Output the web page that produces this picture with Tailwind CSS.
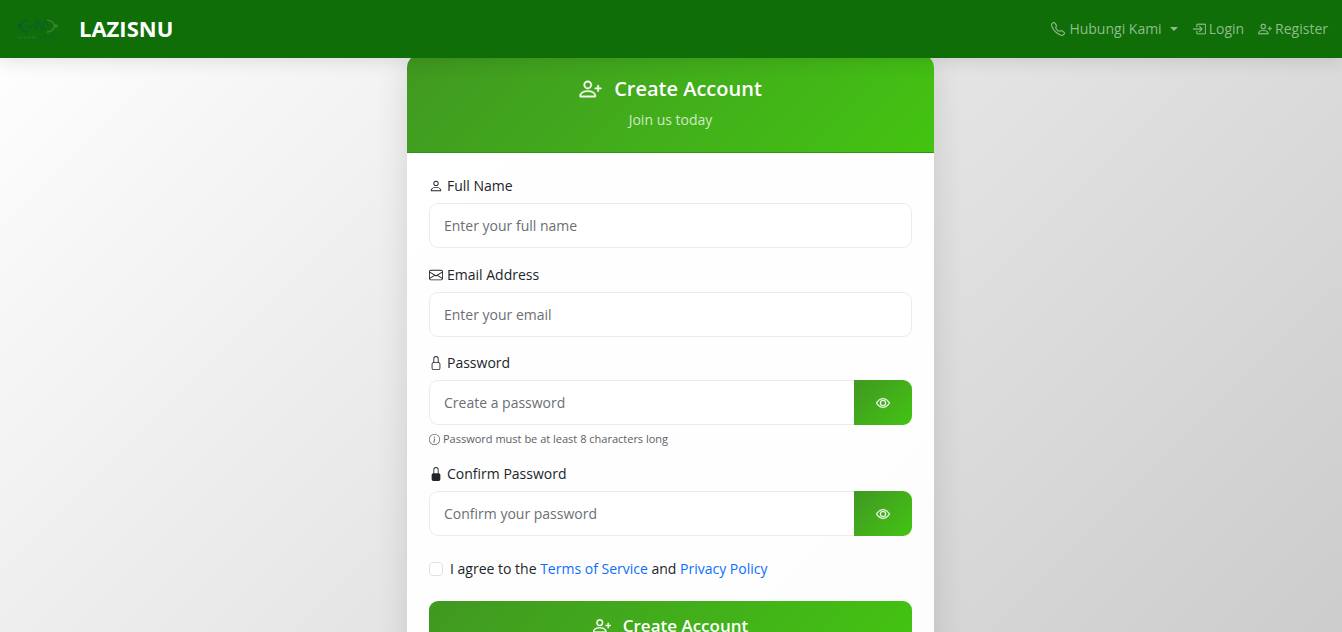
<!DOCTYPE html>
<html lang="id">
<head>
<meta charset="utf-8">
<meta name="viewport" content="width=device-width, initial-scale=1">
<title>LAZISNU - Create Account</title>
<script src="https://cdn.jsdelivr.net/npm/@tailwindcss/browser@4"></script>
</head>
<body class="bg-linear-135 from-white to-[#cccccc] bg-fixed font-['Segoe_UI','Open_Sans',sans-serif] text-sm text-[#212529]">
<svg class="hidden" aria-hidden="true">
  <symbol id="person-plus" viewBox="0 0 16 16"><path d="M6 8a3 3 0 1 0 0-6 3 3 0 0 0 0 6m2-3a2 2 0 1 1-4 0 2 2 0 0 1 4 0m4 8c0 1-1 1-1 1H1s-1 0-1-1 1-4 6-4 6 3 6 4m-1-.004c-.001-.246-.154-.986-.832-1.664C9.516 10.680 8.289 10 6 10s-3.516.68-4.168 1.332c-.678.678-.83 1.418-.832 1.664z"/><path d="M13.500 5a.5.5 0 0 1 .5.5V7h1.500a.5.5 0 0 1 0 1H14v1.500a.5.5 0 0 1-1 0V8h-1.500a.5.5 0 0 1 0-1H13V5.500a.5.5 0 0 1 .5-.5"/></symbol>
  <symbol id="eye" viewBox="0 0 16 16"><path d="M16 8s-3-5.500-8-5.500S0 8 0 8s3 5.500 8 5.500S16 8 16 8M1.173 8a13 13 0 0 1 1.660-2.043C4.120 4.668 5.880 3.500 8 3.500s3.879 1.168 5.168 2.457A13 13 0 0 1 14.828 8q-.086.13-.195.288c-.335.48-.83 1.120-1.465 1.755C11.879 11.332 10.119 12.500 8 12.500s-3.879-1.168-5.168-2.457A13 13 0 0 1 1.172 8z"/><path d="M8 5.500a2.500 2.500 0 1 0 0 5 2.500 2.500 0 0 0 0-5M4.500 8a3.500 3.500 0 1 1 7 0 3.500 3.500 0 0 1-7 0"/></symbol>
</svg>

<header class="sticky top-0 z-10 flex h-[58px] items-center justify-between bg-[#0f6e08] pr-3.5 pl-4 shadow-[0_4px_16px_rgba(0,0,0,0.1)]">
  <a href="#" class="flex items-center gap-5 text-[22px] font-bold text-white">
    <svg class="h-6 w-[43px]" viewBox="0 0 43 24" fill="none" aria-hidden="true">
      <g stroke="#0b5a35" stroke-width="1.3"><path d="M12 3.500Q6 3 4.500 9Q6 15 12 15"/><circle cx="3.500" cy="9" r="1.200" fill="#0b5a35"/></g>
      <g stroke="#3c8436" stroke-width="1.300"><path d="M31 3.500Q37 3 38.500 9Q37 15 31 15"/><circle cx="40" cy="9" r="1.200" fill="#3c8436"/></g>
      <g stroke="#0b5a35" stroke-width="0.800"><path d="M10 10q2-3 3 0t3-1 3 1 3-1 3 1 3-2 4 1M14 7l2 2m3-5 1 2m3-2-1 2m5 1-2 2"/><circle cx="21" cy="8" r="2"/><path d="M14 13h1m3 2h1m2-1h1m2 1h1m3-2h1M21 2v2"/></g>
      <path d="M2 20.500h19" stroke="#24752a" stroke-width="2.500" stroke-dasharray="1 1"/><path d="M22 20.500h19" stroke="#0c6428" stroke-width="2.500" stroke-dasharray="1 1"/>
    </svg>
    LAZISNU
  </a>
  <nav class="flex items-center gap-3.5 font-medium text-[#8fbc8c]">
    <button type="button" class="flex items-center gap-1">
      <svg class="size-3.5" viewBox="0 0 16 16" fill="currentColor" stroke="currentColor" stroke-width="0.300" aria-hidden="true"><path d="M3.654 1.328a.678.678 0 0 0-1.015-.063L1.605 2.300c-.483.484-.661 1.169-.45 1.770a17.600 17.600 0 0 0 4.168 6.608 17.600 17.600 0 0 0 6.608 4.168c.601.211 1.286.033 1.770-.45l1.034-1.034a.678.678 0 0 0-.063-1.015l-2.307-1.794a.68.68 0 0 0-.58-.122l-2.190.547a1.750 1.750 0 0 1-1.657-.459L5.482 8.062a1.750 1.750 0 0 1-.46-1.657l.548-2.190a.68.68 0 0 0-.122-.58zM1.884.511a1.745 1.745 0 0 1 2.612.163L6.290 2.980c.329.423.445.974.315 1.494l-.547 2.190a.68.68 0 0 0 .178.643l2.457 2.457a.68.68 0 0 0 .644.178l2.189-.547a1.750 1.750 0 0 1 1.494.315l2.306 1.794c.829.645.905 1.870.163 2.611l-1.034 1.034c-.74.74-1.846 1.065-2.877.702a18.600 18.600 0 0 1-7.010-4.420 18.600 18.600 0 0 1-4.420-7.009c-.362-1.030-.037-2.137.703-2.877z"/></svg>
      Hubungi Kami
      <svg class="ml-1 h-1 w-2" viewBox="0 0 8 4" fill="currentColor" aria-hidden="true"><path d="M0 0h8L4 4z"/></svg>
    </button>
    <a href="#" class="flex items-center gap-[3px]">
      <svg class="size-3.5" viewBox="0 0 16 16" fill="currentColor" stroke="currentColor" stroke-width="0.300" aria-hidden="true"><path d="M6 3.500a.5.5 0 0 1 .5-.5h8a.5.5 0 0 1 .5.5v9a.5.5 0 0 1-.5.5h-8a.5.5 0 0 1-.5-.5v-2a.5.5 0 0 0-1 0v2A1.500 1.500 0 0 0 6.500 14h8a1.500 1.500 0 0 0 1.500-1.500v-9A1.500 1.500 0 0 0 14.500 2h-8A1.500 1.500 0 0 0 5 3.500v2a.5.5 0 0 0 1 0z"/><path d="M11.854 8.354a.5.5 0 0 0 0-.708l-3-3a.5.5 0 1 0-.708.708L10.293 7.500H1.500a.5.5 0 0 0 0 1h8.793l-2.147 2.146a.5.5 0 0 0 .708.708z"/></svg>
      Login
    </a>
    <a href="#" class="flex items-center gap-[3px]">
      <svg class="size-3.5" fill="currentColor" stroke="currentColor" stroke-width="0.300" aria-hidden="true"><use href="#person-plus"/></svg>
      Register
    </a>
  </nav>
</header>

<main class="-mt-1 flex justify-center pr-px pb-12">
  <section class="w-full max-w-[527px] overflow-hidden rounded-[14px] bg-white/95 shadow-[0_8px_32px_rgba(0,0,0,0.12)]">
    <div class="border-b border-[#35901a] bg-linear-135 from-[#409820] to-[#43c410] px-4 pt-[19px] pb-[22px] text-center text-white">
      <h1 class="flex items-center justify-center gap-3 text-xl leading-8 font-semibold">
        <svg class="size-[23px] pb-px" fill="currentColor" stroke="currentColor" stroke-width="0.300" aria-hidden="true"><use href="#person-plus"/></svg>
        Create Account
      </h1>
      <p class="mt-[5px] leading-5 font-medium text-white/75">Join us today</p>
    </div>

    <form class="px-[22px] pt-[22px] pb-8">
      <div>
        <label for="name" class="flex h-[22px] items-center gap-1">
          <svg class="size-3.5" viewBox="0 0 16 16" fill="currentColor" aria-hidden="true"><path d="M8 8a3 3 0 1 0 0-6 3 3 0 0 0 0 6m2-3a2 2 0 1 1-4 0 2 2 0 0 1 4 0m4 8c0 1-1 1-1 1H3s-1 0-1-1 1-4 6-4 6 3 6 4m-1-.004c-.001-.246-.154-.986-.832-1.664C11.516 10.680 10.289 10 8 10s-3.516.68-4.168 1.332c-.678.678-.83 1.418-.832 1.664z"/></svg>
          Full Name
        </label>
        <input id="name" type="text" placeholder="Enter your full name" class="mt-1.5 h-[45px] w-full rounded-[9px] border border-[#e9ecef] bg-white px-3.5 placeholder:text-[#6b6f73]">
      </div>

      <div class="mt-4">
        <label for="email" class="flex h-[22px] items-center gap-1">
          <svg class="size-3.5" viewBox="0 0 16 16" fill="currentColor" aria-hidden="true"><path d="M0 4a2 2 0 0 1 2-2h12a2 2 0 0 1 2 2v8a2 2 0 0 1-2 2H2a2 2 0 0 1-2-2zm2-1a1 1 0 0 0-1 1v.217l7 4.200 7-4.200V4a1 1 0 0 0-1-1zm13 2.383-4.708 2.825L15 11.105zm-.034 6.876-5.640-3.471L8 9.583l-1.326-.795-5.640 3.470A1 1 0 0 0 2 13h12a1 1 0 0 0 .966-.741M1 11.105l4.708-2.897L1 5.383z"/></svg>
          Email Address
        </label>
        <input id="email" type="email" placeholder="Enter your email" class="mt-1.5 h-[45px] w-full rounded-[9px] border border-[#e9ecef] bg-white px-3.5 placeholder:text-[#6b6f73]">
      </div>

      <div class="mt-[15px]">
        <label for="password" class="flex h-[22px] items-center gap-1">
          <svg class="size-3.5" viewBox="0 0 16 16" fill="currentColor" aria-hidden="true"><path d="M8 1a2 2 0 0 1 2 2v4H6V3a2 2 0 0 1 2-2m3 6V3a3 3 0 0 0-6 0v4a2 2 0 0 0-2 2v5a2 2 0 0 0 2 2h6a2 2 0 0 0 2-2V9a2 2 0 0 0-2-2M5 8h6a1 1 0 0 1 1 1v5a1 1 0 0 1-1 1H5a1 1 0 0 1-1-1V9a1 1 0 0 1 1-1"/></svg>
          Password
        </label>
        <div class="mt-1.5 flex h-[45px]">
          <input id="password" type="password" placeholder="Create a password" class="min-w-0 flex-1 rounded-l-[9px] border border-r-0 border-[#e9ecef] bg-white px-3.5 placeholder:text-[#6b6f73]">
          <button type="button" aria-label="Show password" class="flex w-[58px] items-center justify-center rounded-r-[9px] bg-linear-135 from-[#409820] to-[#43c410] text-white"><svg class="size-3.5" fill="currentColor" stroke="currentColor" stroke-width="0.400" aria-hidden="true"><use href="#eye"/></svg></button>
        </div>
        <p class="mt-1 flex h-5 items-center gap-[3px] text-[11px] text-[#5c6166]">
          <svg class="size-[11px]" viewBox="0 0 16 16" fill="currentColor" aria-hidden="true"><path d="M8 15A7 7 0 1 1 8 1a7 7 0 0 1 0 14m0 1A8 8 0 1 0 8 0a8 8 0 0 0 0 16"/><path d="m8.930 6.588-2.290.287-.082.38.45.083c.294.07.352.176.288.469l-.738 3.468c-.194.897.105 1.319.808 1.319.545 0 1.178-.252 1.465-.598l.088-.416c-.2.176-.492.246-.686.246-.275 0-.375-.193-.304-.533zM9 4.500a1 1 0 1 1-2 0 1 1 0 0 1 2 0"/></svg>
          Password must be at least 8 characters long
        </p>
      </div>

      <div class="mt-3.5">
        <label for="confirm" class="flex h-[22px] items-center gap-1">
          <svg class="size-3.5" viewBox="0 0 16 16" fill="currentColor" aria-hidden="true"><path d="M8 1a2 2 0 0 1 2 2v4H6V3a2 2 0 0 1 2-2m3 6V3a3 3 0 0 0-6 0v4a2 2 0 0 0-2 2v5a2 2 0 0 0 2 2h6a2 2 0 0 0 2-2V9a2 2 0 0 0-2-2"/></svg>
          Confirm Password
        </label>
        <div class="mt-1.5 flex h-[45px]">
          <input id="confirm" type="password" placeholder="Confirm your password" class="min-w-0 flex-1 rounded-l-[9px] border border-r-0 border-[#e9ecef] bg-white px-3.5 placeholder:text-[#6b6f73]">
          <button type="button" aria-label="Show password" class="flex w-[58px] items-center justify-center rounded-r-[9px] bg-linear-135 from-[#409820] to-[#43c410] text-white"><svg class="size-3.5" fill="currentColor" stroke="currentColor" stroke-width="0.400" aria-hidden="true"><use href="#eye"/></svg></button>
        </div>
      </div>

      <div class="mt-[22px] flex h-[22px] items-center gap-[7px]">
        <input id="terms" type="checkbox" class="size-3.5 appearance-none rounded-[4px] border border-[#dee2e6] bg-white checked:bg-[#0d6efd]">
        <label for="terms">I agree to the <a href="#" class="text-[#0d6efd]">Terms of Service</a> and <a href="#" class="text-[#0d6efd]">Privacy Policy</a></label>
      </div>

      <button type="submit" class="mt-[21px] flex h-[50px] w-full items-center justify-center gap-3 rounded-[9px] bg-linear-135 from-[#409820] to-[#43c410] text-[17px] font-semibold text-white">
        <svg class="size-[18px]" fill="currentColor" stroke="currentColor" stroke-width="0.300" aria-hidden="true"><use href="#person-plus"/></svg>
        Create Account
      </button>
      <p class="mt-6 text-center">Already have an account? <a href="#" class="text-[#0d6efd]">Login</a></p>
    </form>
  </section>
</main>
</body>
</html>
